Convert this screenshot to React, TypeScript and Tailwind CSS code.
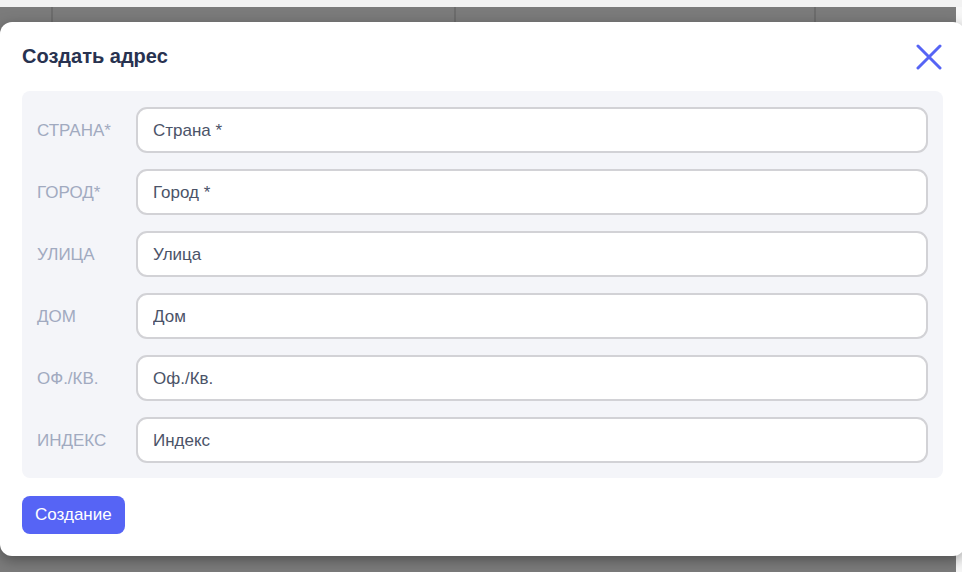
import React from "react";

const fields = [
  { label: "СТРАНА*", placeholder: "Страна *" },
  { label: "ГОРОД*", placeholder: "Город *" },
  { label: "УЛИЦА", placeholder: "Улица" },
  { label: "ДОМ", placeholder: "Дом" },
  { label: "ОФ./КВ.", placeholder: "Оф./Кв." },
  { label: "ИНДЕКС", placeholder: "Индекс" },
];

const CloseIcon = () => (
  <svg width="26" height="26" viewBox="0 0 26 26" fill="none">
    <path d="M2 2 L24 24 M24 2 L2 24" stroke="#5664f5" strokeWidth="3" strokeLinecap="round" />
  </svg>
);

export default function App() {
  return (
    <div className="relative w-[962px] h-[572px] overflow-hidden bg-white font-['Liberation_Sans',Arial,sans-serif]">
      {/* page behind the overlay */}
      <div className="h-[7px] bg-[#f2f2f2]" />
      <div className="flex h-[565px]">
        <div className="w-[956px] bg-[#7b7b7b]">
          <div className="flex h-[16px]">
            <div className="w-[53px] border-r-2 border-[#6c6c6c]" />
            <div className="w-[403px] border-r-2 border-[#6c6c6c]" />
            <div className="w-[360px] border-r-2 border-[#6c6c6c]" />
            <div className="flex-1" />
          </div>
        </div>
        <div className="flex-1 bg-[#f6f6f6]" />
      </div>

      {/* modal */}
      <div className="absolute left-0 top-[22px] w-[965px] rounded-xl bg-white px-[22px] pt-[22px] pb-[22px] shadow-[0_4px_14px_rgba(0,0,0,0.35)]">
        <div className="flex items-center justify-between h-[24px] mb-[23px]">
          <h2 className="text-[20px] font-bold text-[#283250]">Создать адрес</h2>
          <div className="mr-[1px] mt-[2px]">
            <CloseIcon />
          </div>
        </div>

        <div className="flex flex-col gap-4 rounded-lg bg-[#f4f5f9] px-[15px] py-[16px] pb-[15px]">
          {fields.map((f) => (
            <div key={f.label} className="flex items-center">
              <div className="w-[99px] pt-[2px] text-[17px] text-[#a1aac0]">{f.label}</div>
              <input
                className="flex-1 h-[46px] rounded-[11px] border-2 border-[#d2d2d6] bg-white px-[15px] pt-[2px] text-[17px] text-[#4b5368] placeholder:text-[#4b5368] outline-none"
                placeholder={f.placeholder}
              />
            </div>
          ))}
        </div>

        <button className="mt-[18px] h-[38px] rounded-lg bg-[#5664f5] px-[13px] text-[17px] text-white">
          Создание
        </button>
      </div>
    </div>
  );
}
